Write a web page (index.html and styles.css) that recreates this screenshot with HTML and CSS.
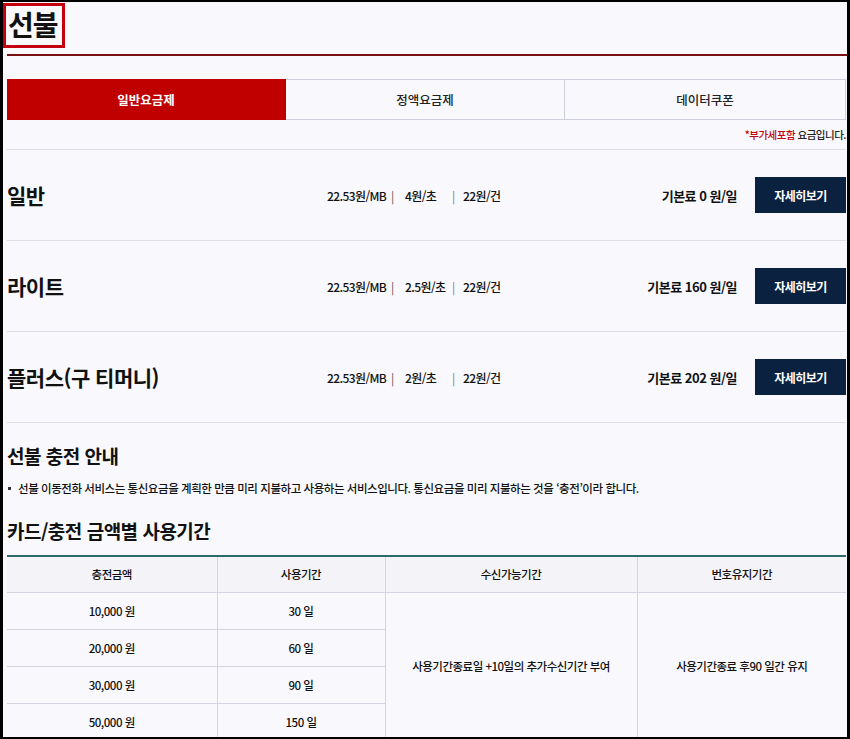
FILE: index.html
```html
<!DOCTYPE html>
<html lang="ko">
<head>
<meta charset="utf-8">
<link rel="stylesheet" href="styles.css">
</head>
<body>
<div class="frame">
  <h1 class="title">선불</h1>
  <div class="title-rule"></div>

  <div class="tabs">
    <div class="tab active">일반요금제</div>
    <div class="tab">정액요금제</div>
    <div class="tab">데이터쿠폰</div>
  </div>
  <p class="note"><span class="red">*부가세포함</span> 요금입니다.</p>

  <div class="plans">
    <div class="plan">
      <div class="plan-name">일반</div>
      <div class="rates"><span class="r1">22.53원/MB</span><span class="sep1">|</span><span class="r2">4원/초</span><span class="sep2">|</span><span>22원/건</span></div>
      <div class="price">기본료 0 원/일</div>
      <button class="btn">자세히보기</button>
    </div>
    <div class="plan">
      <div class="plan-name">라이트</div>
      <div class="rates"><span class="r1">22.53원/MB</span><span class="sep1">|</span><span class="r2">2.5원/초</span><span class="sep2">|</span><span>22원/건</span></div>
      <div class="price">기본료 160 원/일</div>
      <button class="btn">자세히보기</button>
    </div>
    <div class="plan">
      <div class="plan-name">플러스(구 티머니)</div>
      <div class="rates"><span class="r1">22.53원/MB</span><span class="sep1">|</span><span class="r2">2원/초</span><span class="sep2">|</span><span>22원/건</span></div>
      <div class="price">기본료 202 원/일</div>
      <button class="btn">자세히보기</button>
    </div>
  </div>

  <h2 class="sec-title first">선불 충전 안내</h2>
  <ul class="bullets">
    <li>선불 이동전화 서비스는 통신요금을 계획한 만큼 미리 지불하고 사용하는 서비스입니다. 통신요금을 미리 지불하는 것을 ‘충전’이라 합니다.</li>
  </ul>

  <h2 class="sec-title second">카드/충전 금액별 사용기간</h2>
  <table class="period">
    <colgroup>
      <col class="c1"><col class="c2"><col class="c3"><col class="c4">
    </colgroup>
    <thead>
      <tr><th>충전금액</th><th>사용기간</th><th>수신가능기간</th><th>번호유지기간</th></tr>
    </thead>
    <tbody>
      <tr><td>10,000 원</td><td>30 일</td><td rowspan="4">사용기간종료일 +10일의 추가수신기간 부여</td><td rowspan="4">사용기간종료 후90 일간 유지</td></tr>
      <tr><td>20,000 원</td><td>60 일</td></tr>
      <tr><td>30,000 원</td><td>90 일</td></tr>
      <tr><td>50,000 원</td><td>150 일</td></tr>
    </tbody>
  </table>
</div>
</body>
</html>
```

FILE: styles.css
```css
* { box-sizing: border-box; }
html, body { margin: 0; padding: 0; background: #000; }
body {
  width: 850px;
  height: 739px;
  overflow: hidden;
  font-family: "Noto Sans CJK KR", "Noto Sans", sans-serif;
  color: #111;
}
.frame {
  height: 739px;
  background: #f9f9fd;
  border-top: 2px solid #000;
  border-left: 3px solid #000;
  border-right: 3px solid #000;
  border-bottom: 2px solid #000;
  padding: 0 1px 0 4px;
  overflow: hidden;
}
.title {
  display: inline-block;
  margin: 1px 0 0 -4px;
  border: 3px solid #c4000f;
  height: 45px;
  width: 62px;
  padding: 0 0 0 2px;
  font-size: 28px;
  font-weight: 700;
  line-height: 37px;
  letter-spacing: -1px;
  color: #111;
  vertical-align: top;
}
.title-rule {
  margin-top: 6px;
  height: 2px;
  background: #7a1115;
  margin-right: -2px;
}
.tabs {
  margin-top: 23px;
  display: grid;
  grid-template-columns: 279px 279px 1fr;
  height: 41px;
}
.tab {
  display: flex;
  align-items: center;
  justify-content: center;
  border: 1px solid #cdcfdb;
  border-left: none;
  font-size: 12.5px;
  font-weight: 500;
  color: #222;
  background: #f9f9fd;
}
.tab:last-child { border-right: 1px solid #cdcfdb; }
.tab.active {
  background: #c00000;
  border-color: #c00000;
  color: #fff;
  font-weight: 700;
}
.note {
  margin: 0;
  padding: 8px 0 0;
  height: 29px;
  text-align: right;
  font-size: 10.5px;
  line-height: 14px;
  font-weight: 500;
  letter-spacing: -0.5px;
  color: #222;
}
.red { color: #c4000f; }
.plans { border-top: 1px solid #dcdde5; }
.plan {
  display: flex;
  align-items: center;
  height: 91px;
  border-bottom: 1px solid #dcdde5;
}
.plan-name {
  width: 320px;
  font-size: 21px;
  font-weight: 700;
  letter-spacing: -0.5px;
  color: #111;
}
.rates {
  display: flex;
  align-items: center;
  font-size: 12px;
  font-weight: 500;
  letter-spacing: -0.6px;
  color: #111;
}
.r1 { width: 62px; }
.sep1 { margin: 0 0 0 2px; width: 14px; color: #555; font-weight: 400; }
.r2 { width: 47px; }
.sep2 { width: 11px; color: #777; font-weight: 400; }
.price {
  margin-left: auto;
  font-size: 13px;
  font-weight: 700;
  letter-spacing: -0.5px;
  color: #111;
}
.btn {
  margin-left: 18px;
  width: 91px;
  height: 36px;
  border: none;
  background: #0a2240;
  color: #fff;
  font-family: inherit;
  font-size: 12px;
  font-weight: 700;
  letter-spacing: -0.5px;
  padding: 0;
}
.sec-title {
  margin: 0;
  font-size: 19px;
  font-weight: 700;
  line-height: 28px;
  letter-spacing: -0.5px;
  color: #111;
}
.sec-title.first { margin-top: 19px; }
.sec-title.second { margin-top: 21px; }
.bullets {
  list-style: none;
  margin: 10px 0 0;
  padding: 0;
}
.bullets li {
  position: relative;
  padding-left: 11px;
  font-size: 11.5px;
  line-height: 16px;
  font-weight: 500;
  letter-spacing: -0.45px;
  color: #111;
}
.bullets li::before {
  content: "";
  position: absolute;
  left: 1px;
  top: 7px;
  width: 3px;
  height: 3px;
  background: #333;
}
.period {
  margin-top: 10px;
  width: 839px;
  border-collapse: collapse;
  table-layout: fixed;
  border-top: 2px solid #2d6b6a;
}
.c1 { width: 210px; }
.c2 { width: 168px; }
.c3 { width: 252px; }
.c4 { width: 209px; }
.period th, .period td {
  text-align: center;
  font-size: 11.5px;
  font-weight: 500;
  letter-spacing: -0.5px;
  color: #111;
  border: 1px solid #d3d5e1;
  padding: 0;
}
.period th:first-child, .period td:first-child { border-left: none; }
.period th:last-child, .period td:last-child { border-right: none; }
.period th {
  height: 36px;
  background: #f3f3f8;
}
.period td { height: 37px; }
```
